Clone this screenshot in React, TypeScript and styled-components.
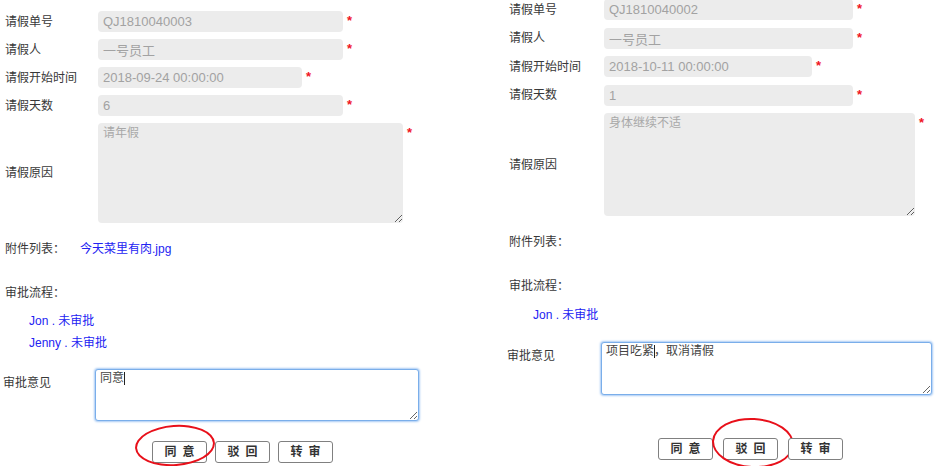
import React from "react";
import styled, { createGlobalStyle } from "styled-components";

const GlobalStyle = createGlobalStyle`
  html, body {
    margin: 0;
    padding: 0;
    background: #fff;
    overflow: hidden;
  }
  body {
    font-family: "Liberation Sans", "Noto Sans CJK SC", sans-serif;
    color: #333;
  }
`;

const FONT = `"Liberation Sans", "Noto Sans CJK SC", sans-serif`;

type Layout = {
  top: number;
  left: number;
  labelW: number;
  inputW: number;
  dateW: number;
  reasonW: number;
  reasonH: number;
  fieldGap: number;
  attachTop: number;
  flowTop: number;
  stepsTop: number;
  commentTop: number;
  commentLabelW: number;
  commentW: number;
  commentH: number;
  caretX: number;
  actionsTop: number;
  actionsLeft: number;
  actionsGap: number;
};

type Leave = {
  no: string;
  person: string;
  start: string;
  days: string;
  reason: string;
  attachment?: string;
  steps: string[];
  comment: string;
  picked: number;
  ring: { l: number; t: number; w: number; h: number; r: number };
};

const Page = styled.main`
  display: grid;
  grid-template-columns: 490px 459px;
  width: 949px;
  height: 466px;
  overflow: hidden;
`;

const Panel = styled.section<{ $left: number }>`
  display: flex;
  flex-direction: column;
  padding-left: ${(p) => p.$left}px;
`;

const Fields = styled.div<{ $top: number; $gap: number }>`
  display: flex;
  flex-direction: column;
  gap: ${(p) => p.$gap}px;
  margin-top: ${(p) => p.$top}px;
`;

const Row = styled.div`
  display: flex;
  align-items: center;
`;

const Label = styled.span<{ $w: number }>`
  flex: none;
  width: ${(p) => p.$w}px;
  font-size: 12px;
  line-height: 18px;
  color: #383838;
`;

const Field = styled.input<{ $w: number }>`
  box-sizing: border-box;
  width: ${(p) => p.$w}px;
  height: 21px;
  padding: 0 5px;
  border: none;
  border-radius: 4px;
  background: #ececec;
  color: #a2a2a2;
  font: 13px ${FONT};
  outline: none;
`;

const Reason = styled.textarea<{ $w: number; $h: number }>`
  box-sizing: border-box;
  width: ${(p) => p.$w}px;
  height: ${(p) => p.$h}px;
  padding: 2px 5px;
  border: none;
  border-radius: 4px;
  background: #ececec;
  color: #a8a8a8;
  font: 12px/16px ${FONT};
  outline: none;
`;

const Star = styled.span`
  align-self: flex-start;
  margin: 3px 0 0 4px;
  color: #f0141e;
  font-size: 13px;
  line-height: 13px;
  font-weight: bold;
`;

const Line = styled.div<{ $top: number }>`
  display: flex;
  margin-top: ${(p) => p.$top}px;
  font-size: 12px;
  line-height: 18px;
  color: #383838;
`;

const LineLabel = styled.span`
  width: 75px;
`;

const FileLink = styled.a`
  color: #2323f2;
  text-decoration: none;
`;

const Steps = styled.ul<{ $top: number }>`
  display: flex;
  flex-direction: column;
  gap: 4px;
  margin: ${(p) => p.$top}px 0 0 24px;
  padding: 0;
  list-style: none;
`;

const Step = styled.li`
  color: #2323f2;
  font-size: 12px;
  line-height: 18px;
`;

const CommentRow = styled.div<{ $top: number }>`
  display: flex;
  align-items: flex-start;
  margin: ${(p) => p.$top}px 0 0 -2px;
`;

const CommentLabel = styled(Label)`
  margin-top: 5px;
`;

const CommentBox = styled.div`
  position: relative;
  display: flex;
`;

const Comment = styled.textarea<{ $w: number; $h: number }>`
  box-sizing: border-box;
  width: ${(p) => p.$w}px;
  height: ${(p) => p.$h}px;
  padding: 1px 4px;
  border: 1px solid #7aaeea;
  border-radius: 3px;
  box-shadow: 0 0 2px 1px #a9cbf4;
  background: #fff;
  color: #444;
  font: 12px/14px ${FONT};
  outline: none;
`;

const Caret = styled.span<{ $x: number }>`
  position: absolute;
  left: ${(p) => p.$x}px;
  top: 3px;
  width: 1px;
  height: 13px;
  background: #222;
`;

const Actions = styled.div<{ $top: number; $left: number; $gap: number }>`
  display: flex;
  gap: ${(p) => p.$gap}px;
  margin: ${(p) => p.$top}px 0 0 ${(p) => p.$left}px;
`;

const ActionButton = styled.button`
  position: relative;
  width: 55px;
  height: 22px;
  padding: 0 0 0 6px;
  border: 1px solid #808080;
  border-radius: 3px;
  background: #fff;
  color: #333;
  font: 600 12px/20px ${FONT};
  letter-spacing: 6px;
`;

const Ring = styled.span<{ $l: number; $t: number; $w: number; $h: number; $r: number }>`
  position: absolute;
  left: ${(p) => p.$l}px;
  top: ${(p) => p.$t}px;
  box-sizing: border-box;
  width: ${(p) => p.$w}px;
  height: ${(p) => p.$h}px;
  border: 2.5px solid #e8101a;
  border-radius: 50%;
  transform: rotate(${(p) => p.$r}deg);
  pointer-events: none;
`;

const LeaveForm = ({ data, lay }: { data: Leave; lay: Layout }) => {
  const actions = ["同意", "驳回", "转审"];
  return (
    <Panel $left={lay.left}>
      <Fields $top={lay.top} $gap={lay.fieldGap}>
        <Row>
          <Label $w={lay.labelW}>请假单号</Label>
          <Field $w={lay.inputW} value={data.no} readOnly />
          <Star>*</Star>
        </Row>
        <Row>
          <Label $w={lay.labelW}>请假人</Label>
          <Field $w={lay.inputW} value={data.person} readOnly />
          <Star>*</Star>
        </Row>
        <Row>
          <Label $w={lay.labelW}>请假开始时间</Label>
          <Field $w={lay.dateW} value={data.start} readOnly />
          <Star>*</Star>
        </Row>
        <Row>
          <Label $w={lay.labelW}>请假天数</Label>
          <Field $w={lay.inputW} value={data.days} readOnly />
          <Star>*</Star>
        </Row>
        <Row>
          <Label $w={lay.labelW}>请假原因</Label>
          <Reason $w={lay.reasonW} $h={lay.reasonH} value={data.reason} readOnly />
          <Star>*</Star>
        </Row>
      </Fields>

      <Line $top={lay.attachTop}>
        <LineLabel>附件列表：</LineLabel>
        {data.attachment && <FileLink href="#">{data.attachment}</FileLink>}
      </Line>

      <Line $top={lay.flowTop}>
        <LineLabel>审批流程：</LineLabel>
      </Line>
      <Steps $top={lay.stepsTop}>
        {data.steps.map((s) => (
          <Step key={s}>{s} . 未审批</Step>
        ))}
      </Steps>

      <CommentRow $top={lay.commentTop}>
        <CommentLabel $w={lay.commentLabelW}>审批意见</CommentLabel>
        <CommentBox>
          <Comment $w={lay.commentW} $h={lay.commentH} defaultValue={data.comment} />
          <Caret $x={lay.caretX} />
        </CommentBox>
      </CommentRow>

      <Actions $top={lay.actionsTop} $left={lay.actionsLeft} $gap={lay.actionsGap}>
        {actions.map((a, i) => (
          <ActionButton key={a} type="button">
            {a}
            {i === data.picked && (
              <Ring
                $l={data.ring.l}
                $t={data.ring.t}
                $w={data.ring.w}
                $h={data.ring.h}
                $r={data.ring.r}
              />
            )}
          </ActionButton>
        ))}
      </Actions>
    </Panel>
  );
};

const leftLayout: Layout = {
  top: 11,
  left: 5,
  labelW: 93,
  inputW: 245,
  dateW: 204,
  reasonW: 305,
  reasonH: 100,
  fieldGap: 7,
  attachTop: 17,
  flowTop: 26,
  stepsTop: 10,
  commentTop: 17,
  commentLabelW: 92,
  commentW: 324,
  commentH: 52,
  caretX: 29,
  actionsTop: 20,
  actionsLeft: 147,
  actionsGap: 8,
};

const rightLayout: Layout = {
  top: -1,
  left: 19,
  labelW: 95,
  inputW: 249,
  dateW: 208,
  reasonW: 311,
  reasonH: 103,
  fieldGap: 7.5,
  attachTop: 17,
  flowTop: 26,
  stepsTop: 11,
  commentTop: 18,
  commentLabelW: 94,
  commentW: 331,
  commentH: 53,
  caretX: 53,
  actionsTop: 43,
  actionsLeft: 149,
  actionsGap: 10,
};

const first: Leave = {
  no: "QJ1810040003",
  person: "一号员工",
  start: "2018-09-24 00:00:00",
  days: "6",
  reason: "请年假",
  attachment: "今天菜里有肉.jpg",
  steps: ["Jon", "Jenny"],
  comment: "同意",
  picked: 0,
  ring: { l: -18, t: -17, w: 80, h: 41, r: -4 },
};

const second: Leave = {
  no: "QJ1810040002",
  person: "一号员工",
  start: "2018-10-11 00:00:00",
  days: "1",
  reason: "身体继续不适",
  steps: ["Jon"],
  comment: "项目吃紧，取消请假",
  picked: 1,
  ring: { l: -12, t: -21, w: 82, h: 50, r: 3 },
};

export default function App() {
  return (
    <>
      <GlobalStyle />
      <Page>
        <LeaveForm data={first} lay={leftLayout} />
        <LeaveForm data={second} lay={rightLayout} />
      </Page>
    </>
  );
}
